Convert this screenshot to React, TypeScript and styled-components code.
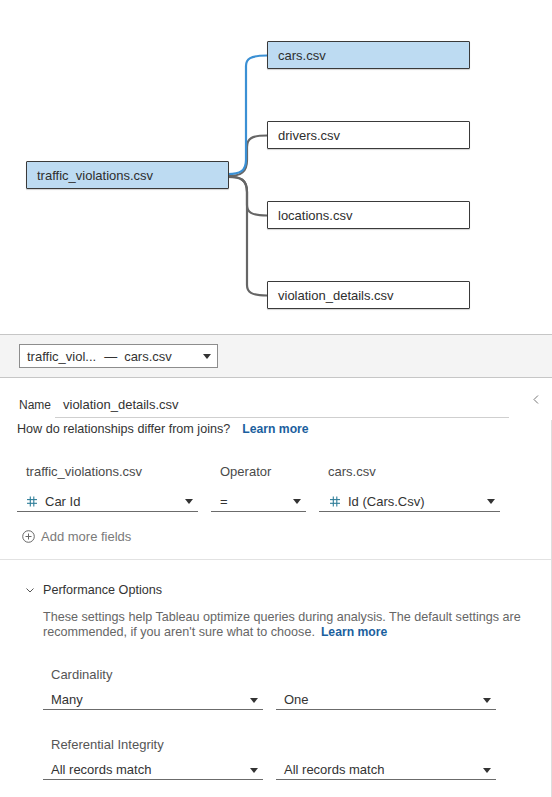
import React from "react";
import styled, { createGlobalStyle } from "styled-components";

const Global = createGlobalStyle`
  html, body { margin: 0; padding: 0; background: #ffffff; }
  body { font-family: "Liberation Sans", Arial, sans-serif; color: #333333; }
  * { box-sizing: border-box; }
`;

const Page = styled.div`
  width: 552px;
  height: 797px;
  overflow: hidden;
  background: #ffffff;
`;

/* ---------- relationship diagram ---------- */

const Canvas = styled.div`
  position: relative;
  height: 334px;
`;

const Links = styled.svg`
  position: absolute;
  left: 0;
  top: 0;
`;

const TableNode = styled.div<{ $selected?: boolean }>`
  position: absolute;
  width: 203px;
  height: 28px;
  padding: 1px 0 0 10px;
  display: flex;
  align-items: center;
  font-size: 13px;
  color: #2e2e2e;
  background: ${(p) => (p.$selected ? "#bddbf2" : "#ffffff")};
  border: 1px solid #3a3a3a;
  border-radius: 1px;
  box-shadow: 0 1px 1px rgba(0, 0, 0, 0.18);
`;

/* ---------- relationship selector bar ---------- */

const Toolbar = styled.div`
  height: 44px;
  border-top: 1px solid #c6c6c6;
  border-bottom: 1px solid #c6c6c6;
  background: #f4f4f4;
  display: flex;
  align-items: center;
  padding-left: 19px;
`;

const PairSelect = styled.div`
  width: 199px;
  height: 24px;
  background: #ffffff;
  border: 1px solid #8d8d8d;
  display: flex;
  align-items: center;
  padding: 1px 6px 0 7px;
  font-size: 13px;
  color: #333333;
`;

const Dash = styled.span`
  margin: 0 7px 0 8px;
`;

const Caret = styled.span`
  margin-left: auto;
  width: 0;
  height: 0;
  border-left: 4px solid transparent;
  border-right: 4px solid transparent;
  border-top: 5px solid #333333;
`;

/* ---------- editor ---------- */

const NameRow = styled.div`
  display: flex;
  align-items: flex-start;
  padding: 15px 13px 0 19px;
`;

const NameLabel = styled.span`
  font-size: 12px;
  line-height: 22px;
  padding-top: 1px;
  color: #333333;
  width: 36px;
`;

const NameInput = styled.div`
  width: 454px;
  height: 25px;
  padding: 1px 0 0 8px;
  font-size: 13px;
  line-height: 22px;
  color: #333333;
  border-bottom: 1px solid #cfcfcf;
`;

const Collapse = styled.svg`
  margin: 2px 0 0 auto;
`;

const Panel = styled.div`
  margin-top: 2px;
  border-right: 1px solid #dedede;
  height: 400px;
`;

const HelpLine = styled.div`
  padding-left: 17px;
  margin-top: 2px;
  font-size: 12.6px;
  line-height: 18px;
  color: #333333;
`;

const Link = styled.span<{ $gap: number }>`
  color: #1b5f9e;
  font-weight: bold;
  font-size: 12.2px;
  margin-left: ${(p) => p.$gap}px;
`;

const FieldGrid = styled.div`
  display: grid;
  grid-template-columns: 181px 95px 181px;
  column-gap: 13px;
  row-gap: 8px;
  padding: 26px 0 0 17px;
`;

const ColumnLabel = styled.div`
  padding-left: 9px;
  font-size: 13px;
  line-height: 16px;
  color: #4a4a4a;
`;

const Dropdown = styled.div<{ $pad?: number }>`
  height: 24px;
  display: flex;
  align-items: center;
  padding: 4px 5px 0 ${(p) => p.$pad ?? 9}px;
  font-size: 13px;
  line-height: 19px;
  color: #333333;
  border-bottom: 1px solid #6b6b6b;
`;

const HashIcon = styled.svg`
  margin: 0 8px 0 2px;
  flex: none;
`;

const AddMore = styled.div`
  display: flex;
  align-items: center;
  gap: 6px;
  height: 18px;
  margin-top: 15px;
  padding-left: 22px;
  font-size: 13px;
  color: #7a7a7a;
`;

const Divider = styled.div`
  height: 1px;
  margin-top: 14px;
  background: #e2e2e2;
`;

const SectionHeader = styled.div`
  display: flex;
  align-items: center;
  height: 18px;
  margin-top: 21px;
  padding-left: 26px;
  font-size: 12.6px;
  color: #333333;
`;

const Chevron = styled.svg`
  margin-right: 9px;
`;

const Description = styled.p`
  margin: 11px 0 0;
  padding: 0 18px 0 43px;
  font-size: 12.6px;
  line-height: 15px;
  color: #666666;
`;

const Settings = styled.div`
  padding-left: 43px;
`;

const SettingLabel = styled.div`
  margin-top: 27px;
  padding-left: 8px;
  font-size: 13px;
  line-height: 16px;
  color: #555555;
`;

const SettingPair = styled.div`
  display: grid;
  grid-template-columns: 220px 220px;
  column-gap: 13px;
  margin-top: 4px;
`;

const SettingSelect = styled(Dropdown)`
  height: 23px;
  line-height: 18px;
`;

const Hash = () => (
  <HashIcon width="10" height="11" viewBox="0 0 10 11">
    <g stroke="#2e7d98" strokeWidth="1.1" fill="none">
      <line x1="3.3" y1="0.5" x2="3.3" y2="10.5" />
      <line x1="6.8" y1="0.5" x2="6.8" y2="10.5" />
      <line x1="0" y1="3.6" x2="10" y2="3.6" />
      <line x1="0" y1="7.3" x2="10" y2="7.3" />
    </g>
  </HashIcon>
);

const tables = [
  { name: "cars.csv", top: 41, selected: true },
  { name: "drivers.csv", top: 121 },
  { name: "locations.csv", top: 201 },
  { name: "violation_details.csv", top: 281 },
];

export default function App() {
  return (
    <Page>
      <Global />
      <Canvas>
        <Links width="552" height="334" viewBox="0 0 552 334">
          <g fill="none" stroke="#666666" strokeWidth="2.2">
            <path d="M228,176 C241,176 247,172 247,160 L247,147 C247,139 251,135.5 267,135.5" />
            <path d="M228,176.5 C241,176.5 247,180 247,192 L247,205 C247,212 251,215.5 267,215.5" />
            <path d="M228,177 C241,177 247,180 247,192 L247,285 C247,292 251,295.5 267,295.5" />
          </g>
          <path
            d="M228,174 C240,174 246,171 246,160 L246,66 C246,59 250,55.5 267,55.5"
            fill="none"
            stroke="#3b90d4"
            strokeWidth="2.2"
          />
        </Links>
        <TableNode $selected style={{ left: 26, top: 161 }}>
          traffic_violations.csv
        </TableNode>
        {tables.map((t) => (
          <TableNode key={t.name} $selected={t.selected} style={{ left: 267, top: t.top }}>
            {t.name}
          </TableNode>
        ))}
      </Canvas>

      <Toolbar>
        <PairSelect>
          traffic_viol...<Dash>—</Dash>cars.csv
          <Caret />
        </PairSelect>
      </Toolbar>

      <NameRow>
        <NameLabel>Name</NameLabel>
        <NameInput>violation_details.csv</NameInput>
        <Collapse width="6" height="9" viewBox="0 0 6 9">
          <polyline points="5,0.5 1,4.5 5,8.5" fill="none" stroke="#777777" strokeWidth="1" />
        </Collapse>
      </NameRow>

      <Panel>
        <HelpLine>
          How do relationships differ from joins?<Link $gap={12}>Learn more</Link>
        </HelpLine>

        <FieldGrid>
          <ColumnLabel>traffic_violations.csv</ColumnLabel>
          <ColumnLabel>Operator</ColumnLabel>
          <ColumnLabel>cars.csv</ColumnLabel>
          <Dropdown $pad={8}>
            <Hash />
            Car Id
            <Caret />
          </Dropdown>
          <Dropdown>
            =
            <Caret />
          </Dropdown>
          <Dropdown $pad={9}>
            <Hash />
            Id (Cars.Csv)
            <Caret />
          </Dropdown>
        </FieldGrid>

        <AddMore>
          <svg width="13" height="13" viewBox="0 0 13 13">
            <g fill="none" stroke="#666666" strokeWidth="1">
              <circle cx="6.5" cy="6.5" r="5.8" />
              <line x1="6.5" y1="3.5" x2="6.5" y2="9.5" />
              <line x1="3.5" y1="6.5" x2="9.5" y2="6.5" />
            </g>
          </svg>
          Add more fields
        </AddMore>

        <Divider />

        <SectionHeader>
          <Chevron width="8" height="5" viewBox="0 0 8 5">
            <polyline points="0.5,0.5 4,4 7.5,0.5" fill="none" stroke="#555555" strokeWidth="1" />
          </Chevron>
          Performance Options
        </SectionHeader>

        <Description>
          These settings help Tableau optimize queries during analysis. The default settings are
          recommended, if you aren't sure what to choose.<Link $gap={6}>Learn more</Link>
        </Description>

        <Settings>
          <SettingLabel>Cardinality</SettingLabel>
          <SettingPair>
            <SettingSelect $pad={8}>
              Many
              <Caret />
            </SettingSelect>
            <SettingSelect $pad={8}>
              One
              <Caret />
            </SettingSelect>
          </SettingPair>

          <SettingLabel>Referential Integrity</SettingLabel>
          <SettingPair>
            <SettingSelect $pad={8}>
              All records match
              <Caret />
            </SettingSelect>
            <SettingSelect $pad={8}>
              All records match
              <Caret />
            </SettingSelect>
          </SettingPair>
        </Settings>
      </Panel>
    </Page>
  );
}
